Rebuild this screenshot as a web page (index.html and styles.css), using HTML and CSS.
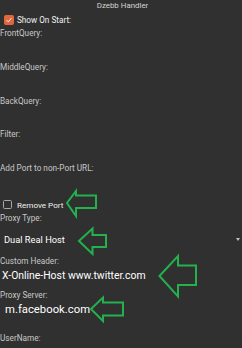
FILE: index.html
```html
<!DOCTYPE html>
<html lang="en">
<head>
  <meta charset="UTF-8" />
  <meta name="viewport" content="width=device-width, initial-scale=1.0"/>
  <title>Dzebb Handler</title>
  <link rel="stylesheet" href="styles.css">
</head>
<body>

  <div class="title">Dzebb Handler</div>

  <!-- Show on start -->
  <div class="check-row">
    <span class="box checked">
      <svg width="10" height="10" viewBox="0 0 10 10"><path d="M2 5.2 L4.1 7.3 L8 2.8" fill="none" stroke="#fff" stroke-width="1.2"/></svg>
    </span>
    <span class="check-text">Show On Start:</span>
  </div>

  <div class="label">FrontQuery:</div>
  <div class="field f22"></div>

  <div class="label">MiddleQuery:</div>
  <div class="field f22"></div>

  <div class="label">BackQuery:</div>
  <div class="field f21"></div>

  <div class="label">Filter:</div>
  <div class="field f22"></div>

  <div class="label">Add Port to non-Port URL:</div>
  <div class="field f23"></div>

  <div class="check-row remove">
    <span class="box"></span>
    <span class="check-text small">Remove Port</span>
  </div>

  <div class="label">Proxy Type:</div>
  <div class="spinner">
    <span class="value">Dual Real Host</span>
    <span class="caret"></span>
  </div>

  <div class="label">Custom Header:</div>
  <div class="field text-field header">X-Online-Host www.twitter.com</div>

  <div class="label">Proxy Server:</div>
  <div class="field text-field server">m.facebook.com</div>

  <div class="label">UserName:</div>

  <!-- annotation arrows drawn over the screen -->
  <svg class="arrows" width="242" height="348" viewBox="0 0 242 348">
    <g fill="none" stroke="#22b14c" stroke-width="2" stroke-linejoin="miter">
      <polygon points="67,203 76,191 76,195.5 96,195.5 96,208 76,208 76,216"/>
      <polygon points="79,241 92.5,228.5 92.5,235 106,235 106,247 92.5,247 92.5,254"/>
      <polygon points="159.5,276 178,256 178,265.5 196,265.5 196,285 178,285 178,296.5"/>
      <polygon points="91,309 103,297.5 103,302.5 123,302.5 123,315.5 103,315.5 103,321"/>
    </g>
  </svg>

</body>
</html>
```

FILE: styles.css
```css
body {
  margin: 0;
  background-color: #303030;
  color: #fff;
  font-family: Roboto, "Noto Sans", sans-serif;
  width: 242px;
  height: 348px;
  overflow: hidden;
  position: relative;
}

.title {
  height: 12px;
  line-height: 12px;
  font-size: 7.9px;
  text-align: center;
  color: #d4d4d4;
  padding-left: 3px;
}

.check-row {
  display: flex;
  align-items: center;
  height: 15px;
  padding-left: 4px;
}

.check-row.remove {
  padding-left: 3px;
}

.box {
  width: 9px;
  height: 9px;
  border: 1px solid #a8a8a8;
  border-radius: 1.5px;
  display: flex;
  align-items: center;
  justify-content: center;
  box-sizing: border-box;
}

.box.checked {
  width: 10px;
  height: 10px;
  background: #e0673e;
  border-color: #e0673e;
}

.check-text {
  margin-left: 3px;
  font-size: 8.2px;
  color: #f0f0f0;
}

.check-text.small {
  margin-left: 5px;
  font-size: 8.1px;
}

.label {
  height: 12px;
  line-height: 12px;
  font-size: 8.2px;
  color: #c8c8c8;
}

.field.f21 { height: 21px; }
.field.f22 { height: 22px; }
.field.f23 { height: 23px; }

.spinner {
  height: 31px;
  display: flex;
  align-items: center;
  padding-left: 4px;
  padding-right: 2px;
}

.spinner .value {
  flex: 1;
  font-size: 9.3px;
  color: #fff;
}

.caret {
  width: 0;
  height: 0;
  border-left: 2.5px solid transparent;
  border-right: 2.5px solid transparent;
  border-top: 3px solid #c0c0c0;
}

.text-field {
  line-height: 18px;
  color: #fff;
}

.text-field.header {
  height: 22px;
  padding-left: 2px;
  font-size: 10.4px;
}

.text-field.server {
  height: 31px;
  padding-left: 5px;
  font-size: 11.3px;
}

.arrows {
  position: absolute;
  left: 0;
  top: 0;
}
```
